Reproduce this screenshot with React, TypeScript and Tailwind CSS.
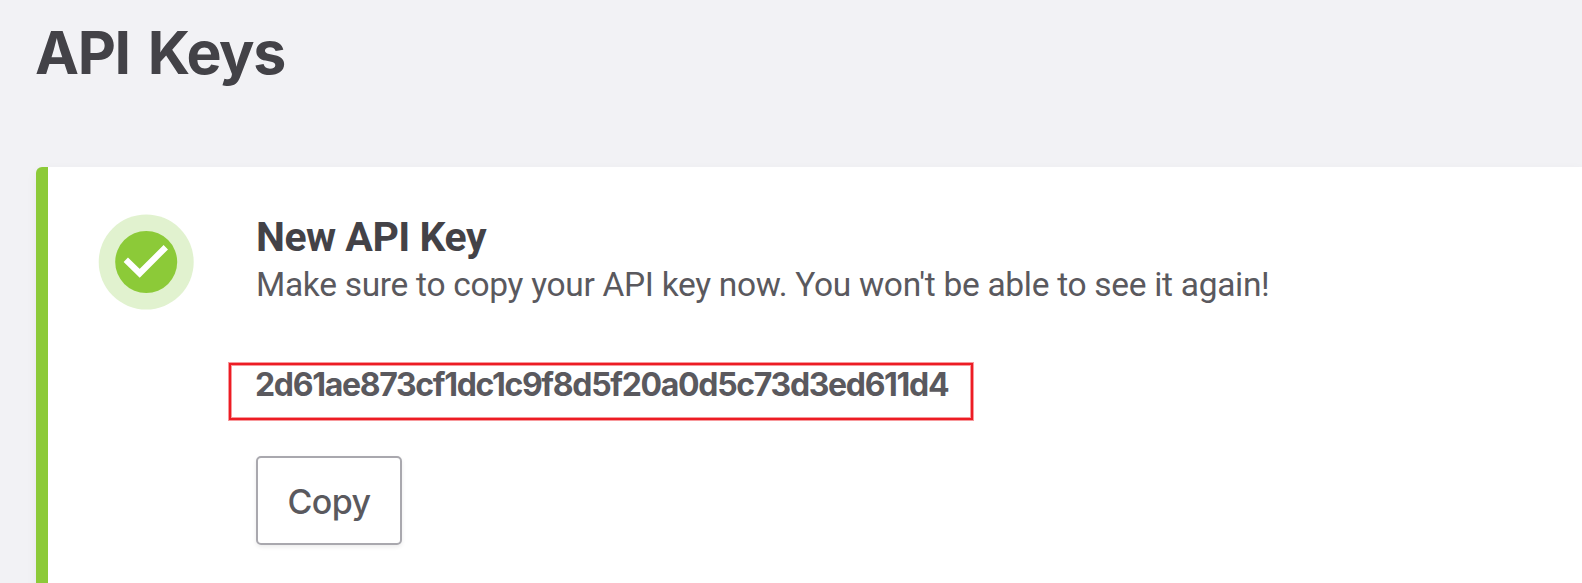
const apiKey = "2d61ae873cf1dc1c9f8d5f20a0d5c73d3ed611d4";

const SuccessIcon = () => (
  <svg viewBox="0 0 96 96" className="w-24 h-24 shrink-0" aria-hidden="true">
    <circle cx="48.2" cy="48" r="47.5" fill="#e1f2cf" />
    <circle cx="48.2" cy="48" r="31" fill="#8cca38" />
    <path d="M27.8 45.8 L41.7 59.3 L67.8 33.2" fill="none" stroke="#fff" strokeWidth="6.2" />
  </svg>
);

const App = () => {
  return (
    <main className="h-[583px] overflow-hidden bg-[#f2f2f5] pl-9 pt-[13px] font-['Inter',sans-serif]">
      <h1 className="text-[59px] leading-[80px] font-bold text-[#434247] tracking-[-1.4px] [word-spacing:5.5px] ml-[-1px] whitespace-nowrap">
        API Keys
      </h1>
      <section className="flex items-start h-[440px] mt-[74px] pl-[50px] bg-white border-l-12 border-[#8cca38] rounded-l-[6px] shadow-[0_4px_12px_rgba(0,0,0,0.05)]">
        <div className="mt-[47px]">
          <SuccessIcon />
        </div>
        <div className="flex flex-col items-start pt-[46px] pl-[62px]">
          <h2 className="text-[41px] leading-[48px] font-bold text-[#434247] font-['Roboto',sans-serif] tracking-[-0.5px] whitespace-nowrap">
            New API Key
          </h2>
          <p className="text-[33.5px] leading-[48px] text-[#5a595e] font-['Roboto',sans-serif] tracking-[-0.3px] whitespace-nowrap">
            Make sure to copy your API key now. You won't be able to see it again!
          </p>
          <div className="w-[744px] h-[57px] mt-[54px] ml-[-27px] pl-6 border-2 border-[#ed1c24] shadow-[0_0_0_1px_rgba(237,28,36,0.45),inset_0_0_0_1px_rgba(237,28,36,0.45)]">
            <code className="block text-[32px] leading-[40px] font-bold text-[#5a595e] font-['Inter',sans-serif] tracking-[-1.32px] whitespace-nowrap">
              {apiKey}
            </code>
          </div>
          <button className="w-[146px] h-[89px] mt-9 pt-px bg-white border-2 border-[#a9a8ae] rounded-[5px] text-[34px] font-medium text-[#5a595e] tracking-[-0.6px] shadow-[0_2px_4px_rgba(0,0,0,0.08)]">
            Copy
          </button>
        </div>
      </section>
    </main>
  );
};

export default App;
